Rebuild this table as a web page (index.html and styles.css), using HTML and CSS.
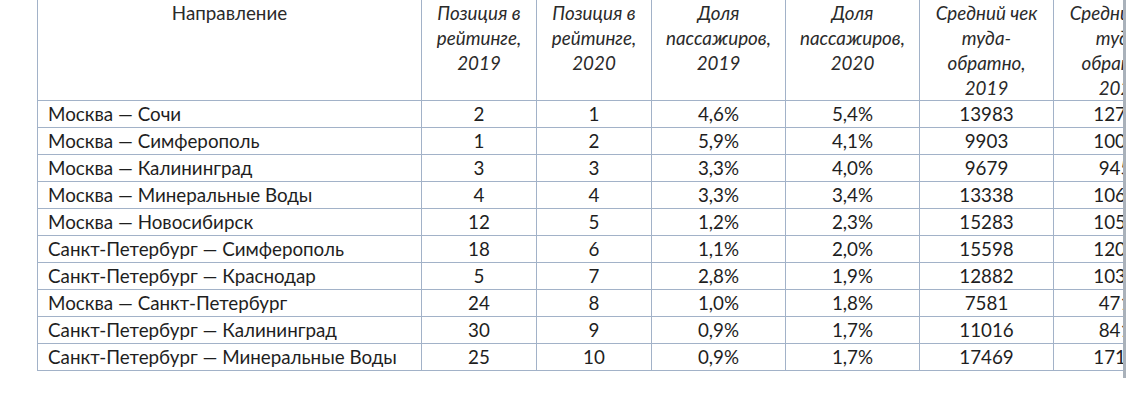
FILE: index.html
```html
<!DOCTYPE html>
<html lang="ru">
<head>
<meta charset="utf-8">
<title>Направления</title>
<link rel="stylesheet" href="styles.css">
</head>
<body>
<div class="frame">
  <table class="grid">
    <colgroup>
      <col class="c-dir">
      <col class="c-pos">
      <col class="c-pos">
      <col class="c-wide">
      <col class="c-wide">
      <col class="c-wide">
      <col class="c-wide">
    </colgroup>
    <thead>
      <tr>
        <th class="h-plain">Направление</th>
        <th>Позиция в<br>рейтинге,<br>2019</th>
        <th>Позиция в<br>рейтинге,<br>2020</th>
        <th>Доля<br>пассажиров,<br>2019</th>
        <th>Доля<br>пассажиров,<br>2020</th>
        <th>Средний чек<br>туда-<br>обратно,<br>2019</th>
        <th>Средний чек<br>туда-<br>обратно,<br>2020</th>
      </tr>
    </thead>
    <tbody>
      <tr><td class="dir">Москва — Сочи</td><td>2</td><td>1</td><td>4,6%</td><td>5,4%</td><td>13983</td><td>12735</td></tr>
      <tr><td class="dir">Москва — Симферополь</td><td>1</td><td>2</td><td>5,9%</td><td>4,1%</td><td>9903</td><td>10012</td></tr>
      <tr><td class="dir">Москва — Калининград</td><td>3</td><td>3</td><td>3,3%</td><td>4,0%</td><td>9679</td><td>9451</td></tr>
      <tr><td class="dir">Москва — Минеральные Воды</td><td>4</td><td>4</td><td>3,3%</td><td>3,4%</td><td>13338</td><td>10642</td></tr>
      <tr><td class="dir">Москва — Новосибирск</td><td>12</td><td>5</td><td>1,2%</td><td>2,3%</td><td>15283</td><td>10568</td></tr>
      <tr><td class="dir">Санкт-Петербург — Симферополь</td><td>18</td><td>6</td><td>1,1%</td><td>2,0%</td><td>15598</td><td>12041</td></tr>
      <tr><td class="dir">Санкт-Петербург — Краснодар</td><td>5</td><td>7</td><td>2,8%</td><td>1,9%</td><td>12882</td><td>10387</td></tr>
      <tr><td class="dir">Москва — Санкт-Петербург</td><td>24</td><td>8</td><td>1,0%</td><td>1,8%</td><td>7581</td><td>4716</td></tr>
      <tr><td class="dir">Санкт-Петербург — Калининград</td><td>30</td><td>9</td><td>0,9%</td><td>1,7%</td><td>11016</td><td>8415</td></tr>
      <tr><td class="dir">Санкт-Петербург — Минеральные Воды</td><td>25</td><td>10</td><td>0,9%</td><td>1,7%</td><td>17469</td><td>17128</td></tr>
    </tbody>
  </table>
</div>
</body>
</html>
```

FILE: styles.css
```css
html, body {
  margin: 0;
  padding: 0;
  background: #ffffff;
}

.frame {
  box-sizing: border-box;
  width: 1126px;
  height: 378px;
  overflow: hidden;
  border-right: 3px solid #a9b1ba;
  padding-left: 37px;
}

.grid {
  border-collapse: collapse;
  table-layout: fixed;
  width: 1150px;
  font-family: Lato, "Open Sans", sans-serif;
  font-size: 18.8px;
  color: #1e1e1e;
}

.c-dir { width: 384px; }
.c-pos { width: 115px; }
.c-wide { width: 134px; }

.grid th,
.grid td {
  border: 1px solid #a2b2c8;
  padding: 0;
}

.grid thead th {
  border-top: none;
  height: 100px;
  vertical-align: top;
  font-weight: normal;
  font-style: italic;
  line-height: 25px;
  color: #2a2a2a;
  text-align: center;
  white-space: nowrap;
  overflow: hidden;
}

.grid thead th.h-plain {
  font-style: normal;
}

.grid td {
  height: 26px;
  text-align: center;
  vertical-align: middle;
  line-height: 26px;
  white-space: nowrap;
}

.grid td.dir {
  text-align: left;
  padding-left: 10px;
}
```
